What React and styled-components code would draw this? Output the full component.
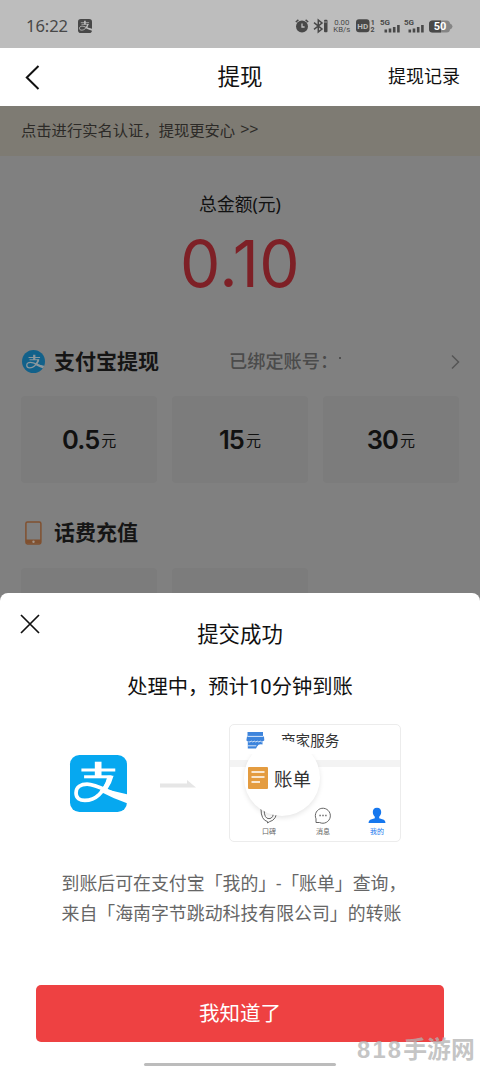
import React from "react";
import styled, { createGlobalStyle } from "styled-components";

const GlobalStyle = createGlobalStyle`
  body { margin: 0; background: #fff; }
  * { box-sizing: border-box; }
  svg { overflow: visible; flex: none; }
`;

const Screen = styled.div`
  position: relative;
  width: 480px;
  height: 1067px;
  overflow: hidden;
  display: flex;
  flex-direction: column;
  background: #808080;
  color: #111;
  font-family: Roboto, "Noto Sans CJK SC", sans-serif;
  white-space: nowrap;
`;

const StatusBar = styled.header`
  flex: none;
  height: 48px;
  padding: 4px 27px 0 26px;
  display: flex;
  align-items: center;
  justify-content: space-between;
  background: #bdbdbd;
  color: #484848;
`;

const StatusGroup = styled.div`
  display: flex;
  align-items: center;
  gap: ${(p) => p.$gap}px;
`;

const Clock = styled.span`
  font: 400 16.6px/20px "Noto Sans", sans-serif;
  letter-spacing: -0.1px;
`;

const NetSpeed = styled.div`
  width: 21px;
  font: 400 7.8px/7.5px Roboto, sans-serif;
  text-align: center;
`;

const NavBar = styled.nav`
  flex: none;
  height: 57.5px;
  padding: 0 20px 0 25px;
  display: grid;
  grid-template-columns: 1fr auto 1fr;
  align-items: center;
  background: #fff;
  color: #111;
`;

const NavTitle = styled.h1`
  margin: 0 5px 0 0;
  font-size: 22.5px;
  line-height: 32px;
  font-weight: 400;
`;

const NavAction = styled.span`
  justify-self: end;
  font-size: 18px;
  line-height: 26px;
`;

const Banner = styled.div`
  flex: none;
  height: 50px;
  padding: 0 21px 3px;
  display: flex;
  align-items: center;
  background: #7e7b73;
  color: #2c2a27;
  font-size: 15.3px;
`;

const BannerArrows = styled.span`
  margin-left: 5px;
  font-family: "Liberation Sans", sans-serif;
  font-size: 15.5px;
`;

const Body = styled.main`
  flex: none;
  height: 437.5px;
  padding: 35px 21px 0;
  overflow: hidden;
`;

const AmountLabel = styled.div`
  height: 26px;
  line-height: 26px;
  text-align: center;
  font-family: "Noto Sans", "Noto Sans CJK SC", sans-serif;
  font-size: 17.8px;
`;

const Amount = styled.div`
  height: 94px;
  line-height: 94px;
  text-align: center;
  font-family: Inter, sans-serif;
  font-size: 64px;
  letter-spacing: 0.5px;
  color: #7e2026;
`;

const SectionHead = styled.div`
  height: 32px;
  margin-top: ${(p) => p.$top}px;
  display: flex;
  align-items: center;
`;

const IconSlot = styled.span`
  width: 33px;
  height: 24px;
  padding-right: 8px;
  display: flex;
  align-items: center;
  justify-content: center;
`;

const SectionTitle = styled.h2`
  margin: 0;
  font-size: 21px;
  line-height: 30px;
  font-weight: 700;
  color: #151515;
`;

const Account = styled.span`
  flex: 1;
  margin-left: 70px;
  display: flex;
  align-items: center;
  font-size: 18.2px;
  font-weight: 500;
  line-height: 26px;
  color: #4b4b4b;
`;

const MaskMark = styled.span`
  width: 2px;
  height: 2px;
  margin: 0 0 8px 1px;
  background: #505050;
`;

const Options = styled.div`
  margin-top: ${(p) => p.$top}px;
  display: grid;
  grid-template-columns: repeat(3, 1fr);
  gap: 14.5px;
`;

const Option = styled.div`
  height: 87px;
  border-radius: 4px;
  display: flex;
  align-items: center;
  justify-content: center;
  gap: 2px;
  background: #7c7c7c;
`;

const Price = styled.span`
  font-family: Inter, sans-serif;
  font-size: 25.5px;
  line-height: 32px;
  font-weight: 600;
  letter-spacing: -0.9px;
`;

const Unit = styled.span`
  padding-top: 3px;
  font-size: 15px;
  line-height: 22px;
`;

const Sheet = styled.section`
  position: relative;
  flex: 1;
  padding: 26px 36px 0;
  border-radius: 8px 8px 0 0;
  display: flex;
  flex-direction: column;
  align-items: center;
  background: #fff;
`;

const CloseButton = styled.button`
  position: absolute;
  left: 20px;
  top: 21px;
  width: 20px;
  height: 20px;
  padding: 0;
  border: 0;
  background: none;
  display: flex;
`;

const SheetTitle = styled.h2`
  margin: 0;
  height: 32px;
  font-size: 21.4px;
  line-height: 32px;
  font-weight: 400;
`;

const SheetStatus = styled.p`
  margin: 19.5px 0 0;
  height: 32px;
  font-size: 20.3px;
  line-height: 32px;
`;

const Guide = styled.div`
  align-self: stretch;
  height: 118px;
  margin-top: 21.5px;
  padding: 0 43px 0 34px;
  display: flex;
  align-items: center;
`;

const Arrow = styled.svg`
  margin: 0 33px;
`;

const Preview = styled.div`
  position: relative;
  flex: none;
  width: 172px;
  height: 118px;
  border: 1px solid #ececec;
  border-radius: 5px;
  color: #333;
`;

const PreviewRow = styled.div`
  height: 35px;
  padding: 0 16px 4px;
  display: flex;
  align-items: center;
  gap: 16px;
  font-size: 14.6px;
  line-height: 30px;
`;

const PreviewBand = styled.div`
  height: 7px;
  background: #f3f3f3;
`;

const PreviewTabs = styled.div`
  height: 74px;
  padding: 0 14px 4px 30px;
  display: flex;
  align-items: flex-end;
  justify-content: space-between;
`;

const PreviewTab = styled.div`
  width: 18px;
  display: flex;
  flex-direction: column;
  align-items: center;
  gap: 3px;
  font-size: 7px;
  line-height: 10px;
  color: ${(p) => (p.$active ? "#1677ee" : "#666")};
`;

const Lens = styled.div`
  position: absolute;
  left: 14px;
  top: 15px;
  width: 76px;
  height: 76px;
  padding: 0 0 0 4px;
  border-radius: 50%;
  display: flex;
  align-items: center;
  gap: 6px;
  background: #fff;
  box-shadow: 0 2px 5px rgba(0, 0, 0, 0.1);
  clip-path: inset(14px -8px -8px -8px);
  font-size: 18.5px;
`;

const LensCap = styled.div`
  position: absolute;
  left: 14px;
  top: 15px;
  width: 76px;
  height: 38px;
  border-radius: 38px 38px 0 0;
  background: #fff;
`;

const Note = styled.p`
  align-self: flex-start;
  margin: 26.5px 0 0 25.5px;
  height: 60px;
  font-size: 17.9px;
  line-height: 30px;
  color: #666;
`;

const Confirm = styled.button`
  align-self: stretch;
  flex: none;
  height: 56.5px;
  margin-top: 56.5px;
  padding: 3px 0 0;
  border: 0;
  border-radius: 5px;
  background: #ee4142;
  color: #fff;
  font: 400 20.5px/53px Roboto, "Noto Sans CJK SC", sans-serif;
`;

const HomeBar = styled.div`
  flex: none;
  width: 192px;
  height: 3px;
  margin-top: 21px;
  border-radius: 2px;
  background: #bcbcbc;
`;

const Watermark = styled.div`
  position: absolute;
  left: 357px;
  top: 1034px;
  display: flex;
  align-items: center;
  line-height: 32px;
  font-size: 23.8px;
  font-weight: 700;
  color: rgba(178, 178, 178, 0.75);
`;

const WatermarkDigits = styled.span`
  font-family: "Liberation Sans", sans-serif;
  letter-spacing: 2.2px;
`;

function AlipayGlyph({ color }) {
  return (
    <g fill="none" stroke={color}>
      <path d="M84 20V66" strokeWidth="20" />
      <path d="M34 44.5H135" strokeWidth="9" />
      <path d="M42 65H124" strokeWidth="9" />
      <path d="M121 64C114 84 102 104 86 119C65 139 18 145 18 113C18 95 33 87 51 87C77 87 104 105 166 130" strokeWidth="11" />
      <path d="M94 99L170 117V144Q128 129 88 108Z" fill={color} stroke="none" />
      <path d="M112 62H130Q124 86 110 105L97 99Q108 82 112 62Z" fill={color} stroke="none" />
    </g>
  );
}

function AlipaySquare({ size, bg, fg, radius }) {
  return (
    <svg width={size} height={size} viewBox="0 0 170 170">
      <rect width="170" height="170" rx={radius} fill={bg} />
      <AlipayGlyph color={fg} />
    </svg>
  );
}

function AlipayRound() {
  return (
    <svg width="23" height="23" viewBox="0 0 170 170">
      <clipPath id="round"><circle cx="85" cy="85" r="85" /></clipPath>
      <g clipPath="url(#round)">
        <rect width="170" height="170" fill="#12618a" />
        <g transform="translate(20 18) scale(.84)"><AlipayGlyph color="#8b979d" /></g>
      </g>
    </svg>
  );
}

function Alarm() {
  return (
    <svg width="14" height="14" viewBox="0 0 14 14">
      <circle cx="7" cy="7.4" r="6" fill="#484848" />
      <path d="M.8 3L3.4 .9M13.2 3L10.6 .9" stroke="#484848" strokeWidth="1.5" />
      <path d="M7 4.5V8H9.6" fill="none" stroke="#bdbdbd" strokeWidth="1.3" />
    </svg>
  );
}

function Bluetooth() {
  return (
    <svg width="15" height="14" viewBox="0 0 15 14" fill="none" stroke="#484848" strokeWidth="1.5">
      <path d="M1 3.6L9 10L5.3 13V1L9 4L1 10.4" />
      <rect x="11" y=".8" width="3.5" height="12.4" rx="1" fill="#484848" stroke="none" />
      <path d="M11 3h3.5" stroke="#858585" />
    </svg>
  );
}

function Hd() {
  return (
    <svg width="20" height="14" viewBox="0 0 20 14" fontFamily="Roboto, sans-serif" fontWeight="700">
      <rect y=".3" width="13.5" height="13" rx="3" fill="#484848" />
      <text x="1.3" y="9.8" fontSize="8" fill="#bdbdbd">HD</text>
      <text x="14.8" y="5.5" fontSize="7" fill="#484848">1</text>
      <text x="14.4" y="13" fontSize="7" fill="#484848">2</text>
    </svg>
  );
}

function Signal() {
  return (
    <svg width="21" height="14" viewBox="0 0 21 14" fill="#484848">
      <text x="0" y="6" fontSize="8" fontWeight="700" fontFamily="Roboto, sans-serif">5G</text>
      <path d="M4.5 10.5h2.6v3H4.5zM8.7 9.5h2.6v4H8.7zM12.9 8h2.6v5.5H12.9zM17.1 6h2.6v7.5h-2.6z" />
    </svg>
  );
}

function Battery() {
  return (
    <svg width="24" height="13" viewBox="0 0 24 13">
      <rect y=".5" width="21" height="12" rx="3.5" fill="#858585" />
      <path d="M3.5 .5H12v12H3.5A3.5 3.5 0 0 1 0 9V4A3.5 3.5 0 0 1 3.5 .5Z" fill="#484848" />
      <path d="M21 3.5q2.5 .8 2.5 3T21 9.5Z" fill="#858585" />
      <text x="4.8" y="10.4" fontSize="11" fontWeight="700" fontFamily="Roboto, sans-serif" fill="#fff">50</text>
    </svg>
  );
}

function Phone() {
  return (
    <svg width="17" height="24" viewBox="0 0 17 24">
      <rect x=".9" y=".9" width="15" height="22" rx="1.6" fill="none" stroke="#80502f" strokeWidth="1.5" />
      <path d="M1 18.5h15v4H1z" fill="#80502f" />
      <circle cx="8.5" cy="20.7" r="1.2" fill="#a39488" />
    </svg>
  );
}

function Store() {
  return (
    <svg width="19" height="17" viewBox="0 0 19 17">
      <path d="M1.5 0h15.5v4.5H18l.3 3.7q-.8 1-1.8 1.1V12.500q-4-.9-5.400 2L10 16.500H1.800V9.300Q.8 9 .4 8.200L1 4.500h.5z" fill="#3d84dc" />
      <path d="M1.500 4.400h15.500M2.500 9.800q1.500.6 2.800-.6 1.500 1.500 3 0 1.500 1.500 3 0 1.500 1.500 3 0 1 1 2.200.6M1.800 13.800h8.500" fill="none" stroke="#fff" strokeWidth=".8" />
    </svg>
  );
}

function BillIcon() {
  return (
    <svg width="20" height="22" viewBox="0 0 20 22">
      <rect width="20" height="22" rx="1" fill="#e49c40" />
      <path d="M3.5 5h13M3.5 10h13M3.5 15h8.5" stroke="#fff" strokeWidth="1.7" />
    </svg>
  );
}

function Koubei() {
  return (
    <svg width="18" height="17" viewBox="0 0 18 17" fill="none" stroke="#666" strokeWidth="1">
      <path d="M1 2Q1 13 7.500 14.600V16L9.500 14.700Q17 13 17 2" />
      <path d="M4.200 3Q4.200 11.700 9 11.700T13.800 3" />
    </svg>
  );
}

function Message() {
  return (
    <svg width="18" height="17" viewBox="0 0 18 17" fill="none" stroke="#666" strokeWidth="1">
      <path d="M2 15.5V11.8A7.5 7.5 0 1 1 5.6 15.5Z" />
      <path d="M5.4 8.5h1.4M8.3 8.5h1.4M11.2 8.5h1.4" strokeWidth="1.3" />
    </svg>
  );
}

function Person() {
  return (
    <svg width="18" height="17" viewBox="0 0 18 17" fill="#1677ee">
      <path d="M9 .8c3 0 4.2 2 4.2 4.3 0 2-.9 3.7-2 4.6v1.5l4.6 1.5q1.6 .7 1.7 3.2H.5q.1-2.5 1.7-3.2l4.6-1.5V9.7c-1.1-.9-2-2.6-2-4.6C4.8 2.8 6 .8 9 .8Z" />
    </svg>
  );
}

export default function App() {
  return (
    <Screen>
      <GlobalStyle />
      <StatusBar>
        <StatusGroup $gap={10}>
          <Clock>16:22</Clock>
          <AlipaySquare size={14} bg="#484848" fg="#bdbdbd" radius={34} />
        </StatusGroup>
        <StatusGroup $gap={3.7}>
          <Alarm />
          <Bluetooth />
          <NetSpeed>0.00<br />KB/s</NetSpeed>
          <Hd />
          <Signal />
          <Signal />
          <Battery />
        </StatusGroup>
      </StatusBar>

      <NavBar>
        <svg width="15" height="26" viewBox="0 0 15 26" fill="none" stroke="#111" strokeWidth="2">
          <path d="M13.5 2L1.8 13.5L13.5 25" />
        </svg>
        <NavTitle>提现</NavTitle>
        <NavAction>提现记录</NavAction>
      </NavBar>

      <Banner>点击进行实名认证，提现更安心<BannerArrows>&gt;&gt;</BannerArrows></Banner>

      <Body>
        <AmountLabel>总金额(元)</AmountLabel>
        <Amount>0.10</Amount>

        <SectionHead $top={35}>
          <IconSlot><AlipayRound /></IconSlot>
          <SectionTitle>支付宝提现</SectionTitle>
          <Account>已绑定账号：<MaskMark /></Account>
          <svg width="8" height="16" viewBox="0 0 8 16" fill="none" stroke="#555" strokeWidth="1.5">
            <path d="M1 1.5L7.5 8L1 14.5" />
          </svg>
        </SectionHead>
        <Options $top={18.5}>
          <Option><Price>0.5</Price><Unit>元</Unit></Option>
          <Option><Price>15</Price><Unit>元</Unit></Option>
          <Option><Price>30</Price><Unit>元</Unit></Option>
        </Options>

        <SectionHead $top={33.5}>
          <IconSlot><Phone /></IconSlot>
          <SectionTitle>话费充值</SectionTitle>
        </SectionHead>
        <Options $top={19}>
          <Option />
          <Option />
        </Options>
      </Body>

      <Sheet>
        <CloseButton aria-label="关闭">
          <svg width="20" height="20" viewBox="0 0 20 20" stroke="#111" strokeWidth="1.7">
            <path d="M1 1L19 19M19 1L1 19" />
          </svg>
        </CloseButton>
        <SheetTitle>提交成功</SheetTitle>
        <SheetStatus>处理中，预计10分钟到账</SheetStatus>
        <Guide>
          <AlipaySquare size={57} bg="#06a8f0" fg="#fff" radius={28} />
          <Arrow width="36" height="10" viewBox="0 0 36 10" fill="#e6e6e6">
            <path d="M0 5.5H27V2L36 9.5H0Z" />
          </Arrow>
          <Preview>
            <PreviewRow><Store />商家服务</PreviewRow>
            <PreviewBand />
            <PreviewTabs>
              <PreviewTab><Koubei />口碑</PreviewTab>
              <PreviewTab><Message />消息</PreviewTab>
              <PreviewTab $active><Person />我的</PreviewTab>
            </PreviewTabs>
            <LensCap />
            <Lens><BillIcon />账单</Lens>
          </Preview>
        </Guide>
        <Note>到账后可在支付宝「我的」-「账单」查询，<br />来自「海南字节跳动科技有限公司」的转账</Note>
        <Confirm>我知道了</Confirm>
        <HomeBar />
      </Sheet>
      <Watermark><WatermarkDigits>818</WatermarkDigits>手游网</Watermark>
    </Screen>
  );
}
